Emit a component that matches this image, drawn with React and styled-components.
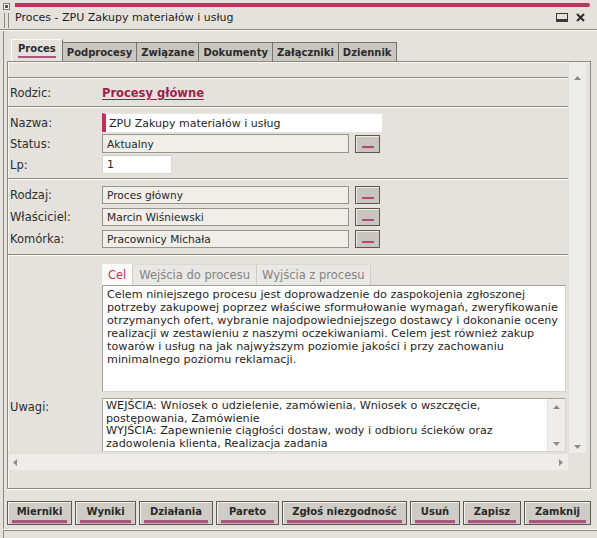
import React from 'react';
import styled, { createGlobalStyle } from 'styled-components';

const C = {
  bg: '#e5e2dd',
  line: '#8c8882',
  light: '#fbfaf8',
  crimson: '#b73660',
  link: '#9e1f4b',
  mauve: '#a9577c',
  text: '#262626',
};

const Global = createGlobalStyle`
  html, body { margin: 0; padding: 0; background: ${C.bg}; }
  body { font-family: "DejaVu Sans", Verdana, sans-serif; font-size: 11px; color: ${C.text}; }
  * { box-sizing: border-box; }
`;

const Window = styled.div`
  width: 597px;
  height: 538px;
  background: ${C.bg};
  overflow: hidden;
  display: flex;
  flex-direction: column;
`;

const Header = styled.header`
  display: flex;
  height: 29px;
`;

const HeaderLeft = styled.div`
  width: 15px;
  padding: 3px 0 0 3px;
  display: flex;
  flex-direction: column;
  gap: 3px;
`;

const SysIcon = styled.span`
  width: 7px;
  height: 7px;
  border: 1px solid #7d7a75;
  background: #f4f2ee;
  display: flex;
  align-items: center;
  justify-content: center;
  &::after {
    content: '';
    width: 3px;
    height: 3px;
    background: #55524e;
  }
`;

const Grip = styled.span`
  margin-left: 1px;
  width: 5px;
  height: 15px;
  border-left: 1px solid #8a8680;
  border-right: 1px solid #8a8680;
`;

const HeaderMain = styled.div`
  flex: 1;
  display: flex;
  flex-direction: column;
`;

const AccentBar = styled.div`
  margin-top: 3px;
  margin-right: 7px;
  height: 4px;
  background: ${C.crimson};
  border-radius: 0 2px 2px 0;
`;

const TitleRow = styled.div`
  height: 21px;
  display: flex;
  align-items: center;
  justify-content: space-between;
  padding-right: 12px;
`;

const Title = styled.span`
  font-size: 11px;
  color: #1e1e1e;
`;

const Controls = styled.div`
  display: flex;
  align-items: center;
  gap: 8px;
`;

const Divider = styled.div`
  border-top: 1px solid ${C.line};
  border-bottom: 1px solid ${C.light};
`;

const Frame = styled.div`
  flex: 1;
  margin-left: 3px;
  border-left: 1px solid ${C.line};
  padding: 8px 6px 0 3px;
  display: flex;
  flex-direction: column;
`;

const TabBar = styled.div`
  display: flex;
  align-items: flex-end;
  height: 22px;
  padding-left: 4px;
`;

const Tab = styled.div`
  height: ${p => (p.$active ? '22px' : '19px')};
  padding: 0 ${p => (p.$active ? '6px' : '4px')};
  margin-left: -1px;
  display: flex;
  align-items: ${p => (p.$active ? 'flex-end' : 'center')};
  padding-bottom: ${p => (p.$active ? '3px' : '0')};
  background: ${p => (p.$active ? C.bg : '#c9c5bf')};
  border: 1px solid #77736e;
  border-bottom: none;
  border-top-color: ${p => (p.$active ? '#fbfaf8' : '#77736e')};
  border-left-color: ${p => (p.$active ? '#fbfaf8' : '#77736e')};
  font-size: 10px;
  font-weight: bold;
  color: #2b2b2b;
  position: relative;
  z-index: ${p => (p.$active ? 1 : 0)};
  &:first-child { margin-left: 0; }
`;

const TabLabel = styled.span`
  line-height: 12px;
  padding-bottom: 1px;
  border-bottom: 2px solid ${C.mauve};
`;

const Panel = styled.div`
  height: 428px;
  border: 1px solid ${C.line};
  box-shadow: 0 1px 0 #fff, inset 1px 1px 0 #f7f5f2;
  padding-right: 4px;
  display: grid;
  grid-template-columns: 1fr 18px;
  grid-template-rows: 391px 17px;
  align-content: start;
`;

const Content = styled.div`
  overflow: hidden;
  display: flex;
  flex-direction: column;
`;

const Spacer = styled.div`
  height: ${p => p.$h}px;
  flex: none;
`;

const Sep = styled.div`
  flex: none;
  border-top: 1px solid #8e8a84;
  border-bottom: 1px solid ${C.light};
`;

const Group = styled.div`
  display: flex;
  flex-direction: column;
  gap: ${p => p.$gap}px;
  padding: ${p => p.$pt}px 0 ${p => p.$pb}px;
`;

const Row = styled.div`
  display: grid;
  grid-template-columns: 94px 1fr;
  align-items: ${p => (p.$top ? 'start' : 'center')};
  height: ${p => (p.$h ? `${p.$h}px` : 'auto')};
  margin-top: ${p => p.$mt || 0}px;
`;

const Label = styled.span`
  padding-left: 2px;
  padding-top: ${p => p.$pt || 0}px;
  font-size: 11.5px;
  color: #2e2e2e;
`;

const ParentLink = styled.a`
  font-size: 11.5px;
  font-weight: bold;
  color: ${C.link};
  text-decoration: underline;
  text-underline-offset: 2px;
  cursor: pointer;
`;

const NameInput = styled.div`
  width: 280px;
  height: 19px;
  background: #fff;
  border-left: 4px solid #c2305f;
  border-top: 1px solid #e9e6e1;
  padding-left: 3px;
  display: flex;
  align-items: center;
  font-size: 11px;
`;

const SmallInput = styled.div`
  width: 70px;
  height: 19px;
  background: #fff;
  border: 1px solid #dcd9d4;
  border-top-color: #c9c6c1;
  padding-left: 4px;
  display: flex;
  align-items: center;
  font-size: 11px;
`;

const Pick = styled.div`
  display: flex;
  align-items: center;
  gap: 6px;
  height: 100%;
`;

const ReadField = styled.div`
  width: 247px;
  height: 100%;
  background: #f1eee9;
  border: 1px solid #97938d;
  padding-left: 4px;
  display: flex;
  align-items: center;
  font-size: 10.6px;
`;

const DotsButton = styled.button`
  width: 25px;
  height: 18px;
  padding: 0 0 4px;
  background: #cac5bf;
  border: 1px solid #5a5652;
  box-shadow: inset 1px 1px 0 #efece8;
  display: flex;
  align-items: flex-end;
  justify-content: center;
  cursor: pointer;
  &::after {
    content: '';
    width: 12px;
    height: 2px;
    background: #b04a76;
    box-shadow: 0 1px 0 #e2b3c6;
  }
`;

const DescCol = styled.div`
  display: flex;
  flex-direction: column;
`;

const SubTabs = styled.div`
  display: flex;
  height: 21px;
`;

const SubTab = styled.div`
  padding: 0 ${p => p.$pad}px;
  display: flex;
  align-items: center;
  background: ${p => (p.$active ? '#fbfbfa' : '#e9e8e5')};
  color: ${p => (p.$active ? C.crimson : '#858380')};
  border-right: 1px solid #cfccc8;
  border-top: 1px solid ${p => (p.$active ? '#fbfbfa' : '#dcdad6')};
  font-size: 11.5px;
`;

const TextBox = styled.div`
  width: 464px;
  height: ${p => p.$h}px;
  background: #fff;
  border: 1px solid #a5a29d;
  border-right-color: #d6d3ce;
  border-bottom-color: #d6d3ce;
  padding: 2px 4px;
  font-size: 11.2px;
  line-height: 13px;
  color: #1f1f1f;
  overflow: hidden;
`;

const NotesBox = styled.div`
  width: 464px;
  height: 54px;
  background: #fff;
  border: 1px solid #a5a29d;
  border-right-color: #d6d3ce;
  border-bottom-color: #d6d3ce;
  display: grid;
  grid-template-columns: 1fr 18px;
  overflow: hidden;
`;

const NotesText = styled.div`
  padding: 1px 3px 0;
  font-size: 11.2px;
  line-height: 12.6px;
  color: #1f1f1f;
  overflow: hidden;
`;

const Line = styled.span`
  display: block;
  white-space: nowrap;
`;

const VScroll = styled.div`
  background: #efedea;
  border-left: 1px solid #e2dfda;
  display: flex;
  flex-direction: column;
  justify-content: space-between;
  align-items: center;
  padding: ${p => p.$pad || '12px 0 2px'};
`;

const HScroll = styled.div`
  background: #efedea;
  border-top: 1px solid #e2dfda;
  display: flex;
  justify-content: space-between;
  align-items: center;
  padding: 0 4px 0 4px;
`;

const ButtonBar = styled.div`
  display: flex;
  gap: 3px;
  margin-top: 12px;
`;

const ActionButton = styled.button`
  width: ${p => p.$w}px;
  height: 24px;
  padding: 5px 4px 0;
  background: #cfcbc5;
  border: 1px solid #5d5955;
  box-shadow: inset 1px 1px 0 #f3f1ee;
  font-family: "DejaVu Sans", Verdana, sans-serif;
  font-size: 10px;
  font-weight: bold;
  color: #2a2a2a;
  display: flex;
  flex-direction: column;
  align-items: stretch;
  gap: 3px;
  cursor: pointer;
  &::after {
    content: '';
    height: 3px;
    background: ${C.mauve};
    box-shadow: 0 1px 0 #d9aabd;
  }
`;

const ButtonText = styled.span`
  line-height: 10px;
  text-align: center;
`;

const BottomLine = styled.div`
  margin: 4px -6px 0 -4px;
  border-top: 1px solid ${C.light};
  border-bottom: 1px solid ${C.line};
`;

const Arrow = ({ dir }) => {
  const pts = {
    up: '0,5 3.5,1 7,5',
    down: '0,1 3.5,5 7,1',
    left: '5,0 1,3.5 5,7',
    right: '1,0 5,3.5 1,7',
  }[dir];
  const vertical = dir === 'up' || dir === 'down';
  return (
    <svg width={vertical ? 7 : 6} height={vertical ? 6 : 7} viewBox={vertical ? '0 0 7 6' : '0 0 6 7'}>
      <polygon points={pts} fill="#8e8b87" />
    </svg>
  );
};

const MinimizeIcon = () => (
  <svg width="12" height="9" viewBox="0 0 12 9">
    <rect x="0.5" y="0.5" width="11" height="8" fill="none" stroke="#3a3a3a" />
    <rect x="1" y="6" width="10" height="2.5" fill="#3a3a3a" />
  </svg>
);

const CloseIcon = () => (
  <svg width="9" height="9" viewBox="0 0 9 9">
    <path d="M1 1 L8 8 M8 1 L1 8" stroke="#2c2c2c" strokeWidth="2" />
  </svg>
);

const tabs = ['Proces', 'Podprocesy', 'Związane', 'Dokumenty', 'Załączniki', 'Dziennik'];

const goalLines = [
  'Celem niniejszego procesu jest doprowadzenie do zaspokojenia zgłoszonej',
  'potrzeby zakupowej poprzez właściwe sformułowanie wymagań, zweryfikowanie',
  'otrzymanych ofert, wybranie najodpowiedniejszego dostawcy i dokonanie oceny',
  'realizacji w zestawieniu z naszymi oczekiwaniami. Celem jest również zakup',
  'towarów i usług na jak najwyższym poziomie jakości i przy zachowaniu',
  'minimalnego poziomu reklamacji.',
];

const noteLines = [
  'WEJŚCIA: Wniosek o udzielenie, zamówienia, Wniosek o wszczęcie,',
  'postępowania, Zamówienie',
  'WYJŚCIA: Zapewnienie ciągłości dostaw, wody i odbioru ścieków oraz',
  'zadowolenia klienta, Realizacja zadania',
];

const buttons = [
  ['Mierniki', 65],
  ['Wyniki', 61],
  ['Działania', 74],
  ['Pareto', 63],
  ['Zgłoś niezgodność', 125],
  ['Usuń', 50],
  ['Zapisz', 58],
  ['Zamknij', 67],
];

const pickRows = [
  ['Rodzaj:', 'Proces główny'],
  ['Właściciel:', 'Marcin Wiśniewski'],
  ['Komórka:', 'Pracownicy Michała'],
];

export default function App() {
  return (
    <Window>
      <Global />
      <Header>
        <HeaderLeft>
          <SysIcon />
          <Grip />
        </HeaderLeft>
        <HeaderMain>
          <AccentBar />
          <TitleRow>
            <Title>Proces - ZPU Zakupy materiałów i usług</Title>
            <Controls>
              <MinimizeIcon />
              <CloseIcon />
            </Controls>
          </TitleRow>
        </HeaderMain>
      </Header>
      <Divider />
      <Frame>
        <TabBar>
          {tabs.map((t, i) => (
            <Tab key={t} $active={i === 0}>
              {i === 0 ? <TabLabel>{t}</TabLabel> : t}
            </Tab>
          ))}
        </TabBar>
        <Panel>
          <Content>
            <Spacer $h={15} />
            <Sep />
            <Row $h={27}>
              <Label>Rodzic:</Label>
              <span><ParentLink>Procesy główne</ParentLink></span>
            </Row>
            <Sep />
            <Group $pt={5} $pb={4} $gap={2}>
              <Row $h={19}>
                <Label>Nazwa:</Label>
                <NameInput>ZPU Zakupy materiałów i usług</NameInput>
              </Row>
              <Row $h={19}>
                <Label>Status:</Label>
                <Pick>
                  <ReadField>Aktualny</ReadField>
                  <DotsButton aria-label="wybierz" />
                </Pick>
              </Row>
              <Row $h={19}>
                <Label>Lp:</Label>
                <SmallInput>1</SmallInput>
              </Row>
            </Group>
            <Sep />
            <Group $pt={6} $pb={6} $gap={4}>
              {pickRows.map(([l, v]) => (
                <Row key={l} $h={18}>
                  <Label>{l}</Label>
                  <Pick>
                    <ReadField>{v}</ReadField>
                    <DotsButton aria-label="wybierz" />
                  </Pick>
                </Row>
              ))}
            </Group>
            <Sep />
            <Row $top $mt={8}>
              <span />
              <DescCol>
                <SubTabs>
                  <SubTab $active $pad={6}>Cel</SubTab>
                  <SubTab $pad={6}>Wejścia do procesu</SubTab>
                  <SubTab $pad={5}>Wyjścia z procesu</SubTab>
                </SubTabs>
                <TextBox $h={107}>
                  {goalLines.map(l => <Line key={l}>{l}</Line>)}
                </TextBox>
              </DescCol>
            </Row>
            <Row $top $mt={6}>
              <Label $pt={2}>Uwagi:</Label>
              <NotesBox>
                <NotesText>
                  {noteLines.map(l => <Line key={l}>{l}</Line>)}
                </NotesText>
                <VScroll $pad="5px 0 4px">
                  <Arrow dir="up" />
                  <Arrow dir="down" />
                </VScroll>
              </NotesBox>
            </Row>
          </Content>
          <VScroll $pad="13px 0 3px">
            <Arrow dir="up" />
            <Arrow dir="down" />
          </VScroll>
          <HScroll>
            <Arrow dir="left" />
            <Arrow dir="right" />
          </HScroll>
          <span />
        </Panel>
        <ButtonBar>
          {buttons.map(([t, w]) => (
            <ActionButton key={t} $w={w}>
              <ButtonText>{t}</ButtonText>
            </ActionButton>
          ))}
        </ButtonBar>
        <BottomLine />
      </Frame>
    </Window>
  );
}
